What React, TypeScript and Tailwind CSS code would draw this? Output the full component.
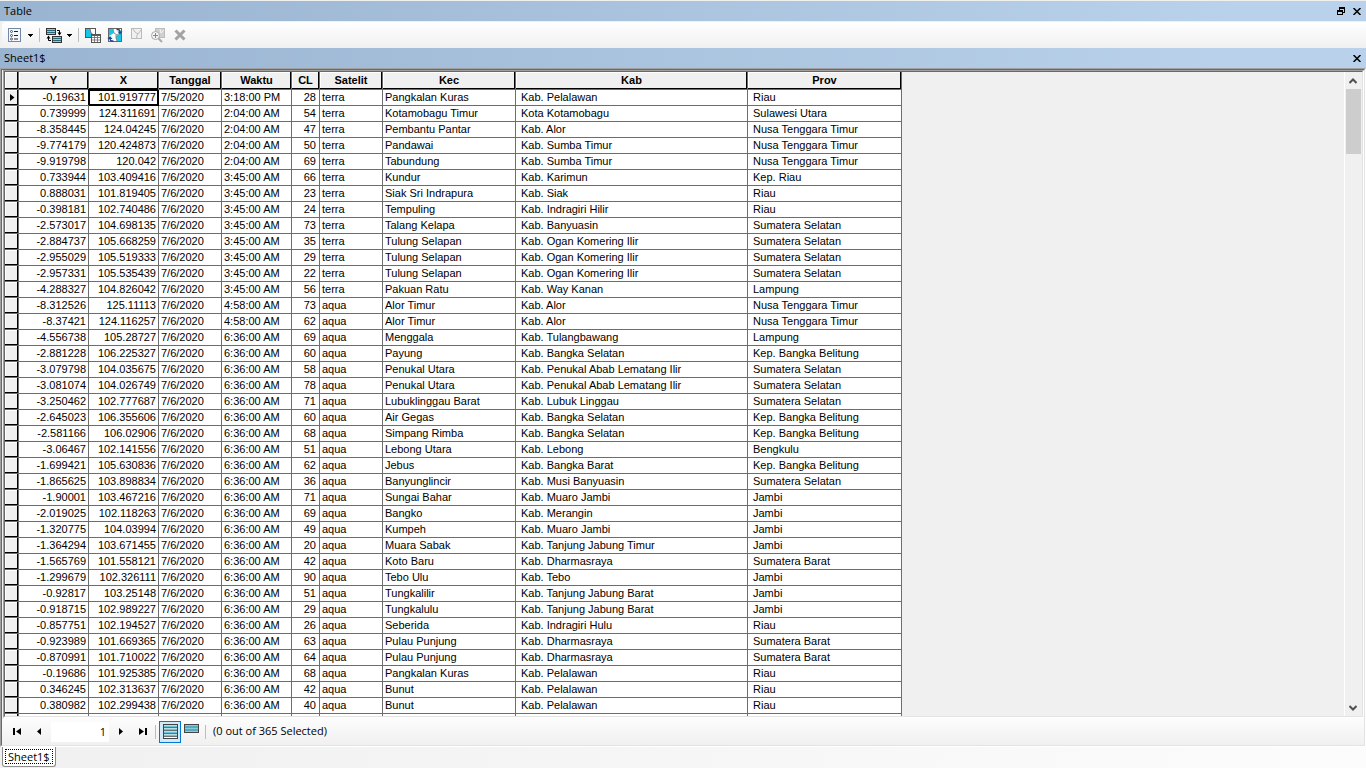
import type { ReactNode } from 'react';

type Row = [string, string, string, string, string, string, string, string, string];

const columns = [
  { name: 'Y', width: 'w-[70px]', align: 'text-right pr-0.5' },
  { name: 'X', width: 'w-[70px]', align: 'text-right pr-0.5' },
  { name: 'Tanggal', width: 'w-[63px]', align: 'text-left pl-0.5' },
  { name: 'Waktu', width: 'w-[70px]', align: 'text-left pl-0.5' },
  { name: 'CL', width: 'w-[28px]', align: 'text-right pr-[3px]' },
  { name: 'Satelit', width: 'w-[63px]', align: 'text-left pl-0.5' },
  { name: 'Kec', width: 'w-[133px]', align: 'text-left pl-0.5' },
  { name: 'Kab', width: 'w-[232px]', align: 'text-left pl-[5px]' },
  { name: 'Prov', width: 'w-[154px]', align: 'text-left pl-[5px]' },
];

const T = 'terra';
const A = 'aqua';
const D = '7/6/2020';

const rows: Row[] = [
  ['-0.19631', '101.919777', '7/5/2020', '3:18:00 PM', '28', T, 'Pangkalan Kuras', 'Kab. Pelalawan', 'Riau'],
  ['0.739999', '124.311691', D, '2:04:00 AM', '54', T, 'Kotamobagu Timur', 'Kota Kotamobagu', 'Sulawesi Utara'],
  ['-8.358445', '124.04245', D, '2:04:00 AM', '47', T, 'Pembantu Pantar', 'Kab. Alor', 'Nusa Tenggara Timur'],
  ['-9.774179', '120.424873', D, '2:04:00 AM', '50', T, 'Pandawai', 'Kab. Sumba Timur', 'Nusa Tenggara Timur'],
  ['-9.919798', '120.042', D, '2:04:00 AM', '69', T, 'Tabundung', 'Kab. Sumba Timur', 'Nusa Tenggara Timur'],
  ['0.733944', '103.409416', D, '3:45:00 AM', '66', T, 'Kundur', 'Kab. Karimun', 'Kep. Riau'],
  ['0.888031', '101.819405', D, '3:45:00 AM', '23', T, 'Siak Sri Indrapura', 'Kab. Siak', 'Riau'],
  ['-0.398181', '102.740486', D, '3:45:00 AM', '24', T, 'Tempuling', 'Kab. Indragiri Hilir', 'Riau'],
  ['-2.573017', '104.698135', D, '3:45:00 AM', '73', T, 'Talang Kelapa', 'Kab. Banyuasin', 'Sumatera Selatan'],
  ['-2.884737', '105.668259', D, '3:45:00 AM', '35', T, 'Tulung Selapan', 'Kab. Ogan Komering Ilir', 'Sumatera Selatan'],
  ['-2.955029', '105.519333', D, '3:45:00 AM', '29', T, 'Tulung Selapan', 'Kab. Ogan Komering Ilir', 'Sumatera Selatan'],
  ['-2.957331', '105.535439', D, '3:45:00 AM', '22', T, 'Tulung Selapan', 'Kab. Ogan Komering Ilir', 'Sumatera Selatan'],
  ['-4.288327', '104.826042', D, '3:45:00 AM', '56', T, 'Pakuan Ratu', 'Kab. Way Kanan', 'Lampung'],
  ['-8.312526', '125.11113', D, '4:58:00 AM', '73', A, 'Alor Timur', 'Kab. Alor', 'Nusa Tenggara Timur'],
  ['-8.37421', '124.116257', D, '4:58:00 AM', '62', A, 'Alor Timur', 'Kab. Alor', 'Nusa Tenggara Timur'],
  ['-4.556738', '105.28727', D, '6:36:00 AM', '69', A, 'Menggala', 'Kab. Tulangbawang', 'Lampung'],
  ['-2.881228', '106.225327', D, '6:36:00 AM', '60', A, 'Payung', 'Kab. Bangka Selatan', 'Kep. Bangka Belitung'],
  ['-3.079798', '104.035675', D, '6:36:00 AM', '58', A, 'Penukal Utara', 'Kab. Penukal Abab Lematang Ilir', 'Sumatera Selatan'],
  ['-3.081074', '104.026749', D, '6:36:00 AM', '78', A, 'Penukal Utara', 'Kab. Penukal Abab Lematang Ilir', 'Sumatera Selatan'],
  ['-3.250462', '102.777687', D, '6:36:00 AM', '71', A, 'Lubuklinggau Barat', 'Kab. Lubuk Linggau', 'Sumatera Selatan'],
  ['-2.645023', '106.355606', D, '6:36:00 AM', '60', A, 'Air Gegas', 'Kab. Bangka Selatan', 'Kep. Bangka Belitung'],
  ['-2.581166', '106.02906', D, '6:36:00 AM', '68', A, 'Simpang Rimba', 'Kab. Bangka Selatan', 'Kep. Bangka Belitung'],
  ['-3.06467', '102.141556', D, '6:36:00 AM', '51', A, 'Lebong Utara', 'Kab. Lebong', 'Bengkulu'],
  ['-1.699421', '105.630836', D, '6:36:00 AM', '62', A, 'Jebus', 'Kab. Bangka Barat', 'Kep. Bangka Belitung'],
  ['-1.865625', '103.898834', D, '6:36:00 AM', '36', A, 'Banyunglincir', 'Kab. Musi Banyuasin', 'Sumatera Selatan'],
  ['-1.90001', '103.467216', D, '6:36:00 AM', '71', A, 'Sungai Bahar', 'Kab. Muaro Jambi', 'Jambi'],
  ['-2.019025', '102.118263', D, '6:36:00 AM', '69', A, 'Bangko', 'Kab. Merangin', 'Jambi'],
  ['-1.320775', '104.03994', D, '6:36:00 AM', '49', A, 'Kumpeh', 'Kab. Muaro Jambi', 'Jambi'],
  ['-1.364294', '103.671455', D, '6:36:00 AM', '20', A, 'Muara Sabak', 'Kab. Tanjung Jabung Timur', 'Jambi'],
  ['-1.565769', '101.558121', D, '6:36:00 AM', '42', A, 'Koto Baru', 'Kab. Dharmasraya', 'Sumatera Barat'],
  ['-1.299679', '102.326111', D, '6:36:00 AM', '90', A, 'Tebo Ulu', 'Kab. Tebo', 'Jambi'],
  ['-0.92817', '103.25148', D, '6:36:00 AM', '51', A, 'Tungkalilir', 'Kab. Tanjung Jabung Barat', 'Jambi'],
  ['-0.918715', '102.989227', D, '6:36:00 AM', '29', A, 'Tungkalulu', 'Kab. Tanjung Jabung Barat', 'Jambi'],
  ['-0.857751', '102.194527', D, '6:36:00 AM', '26', A, 'Seberida', 'Kab. Indragiri Hulu', 'Riau'],
  ['-0.923989', '101.669365', D, '6:36:00 AM', '63', A, 'Pulau Punjung', 'Kab. Dharmasraya', 'Sumatera Barat'],
  ['-0.870991', '101.710022', D, '6:36:00 AM', '64', A, 'Pulau Punjung', 'Kab. Dharmasraya', 'Sumatera Barat'],
  ['-0.19686', '101.925385', D, '6:36:00 AM', '68', A, 'Pangkalan Kuras', 'Kab. Pelalawan', 'Riau'],
  ['0.346245', '102.313637', D, '6:36:00 AM', '42', A, 'Bunut', 'Kab. Pelalawan', 'Riau'],
  ['0.380982', '102.299438', D, '6:36:00 AM', '40', A, 'Bunut', 'Kab. Pelalawan', 'Riau'],
  ['', '', '', '', '', '', '', '', ''],
];

function IconButton({
  label,
  className = '',
  disabled,
  children,
}: {
  label: string;
  className?: string;
  disabled?: boolean;
  children: ReactNode;
}) {
  return (
    <button
      type="button"
      aria-label={label}
      title={label}
      disabled={disabled}
      className={`flex shrink-0 items-center justify-center ${className}`}
    >
      {children}
    </button>
  );
}

function Separator() {
  return <div className="h-[14px] w-px shrink-0 bg-[#bdbdbd]" />;
}

function Caret() {
  return (
    <svg width="5" height="3" viewBox="0 0 5 3" className="shrink-0" shapeRendering="crispEdges">
      <path d="M0 0h5v1H0zM1 1h3v1H1zM2 2h1v1H2z" fill="#000" />
    </svg>
  );
}

function CloseIcon() {
  return (
    <svg width="8" height="7" viewBox="0 0 8 7">
      <path d="M0.5 0L7.5 7M7.5 0L0.5 7" stroke="#000" strokeWidth="1.5" />
    </svg>
  );
}

function OptionsIcon() {
  return (
    <svg width="13" height="14" viewBox="0 0 13 14">
      <rect x="0.5" y="0.5" width="12" height="13" fill="#f4f8fc" stroke="#7088ac" />
      {[3.5, 7.5, 11].map((y) => (
        <g key={y}>
          <circle cx="3.5" cy={y} r="1" fill="#fff" stroke="#333" strokeWidth="0.8" />
          <path d={`M6 ${y}h4`} stroke="#222" />
        </g>
      ))}
    </svg>
  );
}

function RelateIcon() {
  return (
    <svg width="16" height="15" viewBox="0 0 16 15">
      <rect x="0.5" y="0.5" width="9" height="6" fill="#7ed0e3" stroke="#333" />
      <path d="M1 2.5h8M1 4.5h8" stroke="#286878" />
      <rect x="6.5" y="8.5" width="9" height="6" fill="#7ed0e3" stroke="#333" />
      <path d="M7 10.5h8M7 12.5h8" stroke="#286878" />
      <path d="M11 2.5h2.5V5M5 12.5H2.5V10" fill="none" stroke="#000" />
      <path d="M11.5 4.500h4l-2 3zM0.500 10.500h4l-2-3z" fill="#000" />
    </svg>
  );
}

function SelectAttributesIcon() {
  return (
    <svg width="16" height="15" viewBox="0 0 16 15">
      <rect x="0.5" y="0.5" width="10" height="9" fill="#fff" stroke="#555" />
      <path d="M1 1h4l1 4 4 3v1H1z" fill="#18c5e8" />
      <path d="M5 1l1 4 4 3" fill="none" stroke="#777" />
      <rect x="6.5" y="6.5" width="9" height="8" fill="#fff" stroke="#555" />
      <path d="M7 7.5h8" stroke="#44648c" />
      <path d="M7 9.5h8M7 12h8M9.5 8v6M12.5 8v6" stroke="#666" strokeWidth="0.8" />
    </svg>
  );
}

function SwitchSelectionIcon() {
  return (
    <svg width="16" height="15" viewBox="0 0 16 15">
      <rect x="1.5" y="0.5" width="13" height="13" fill="#fff" stroke="#666" />
      <path d="M2 1h4l1 4-5 3z" fill="#18c5e8" />
      <path d="M9 8l5-3v8h-4l-1-2z" fill="#18c5e8" />
      <path d="M6 1l1 4 3 2 4-3M9 7v3l1 3" fill="none" stroke="#888" />
      <path d="M9.5 1.5q3.5-0.5 3.500 2.500" fill="none" stroke="#17498b" strokeWidth="1.5" />
      <path d="M10.500 3.500h5L13 6.500z" fill="#17498b" />
      <path d="M6.500 13q-3.500 0.500-3.500-2.500" fill="none" stroke="#17498b" strokeWidth="1.5" />
      <path d="M0.500 11h5L3 8z" fill="#17498b" />
    </svg>
  );
}

function ClearSelectionIcon() {
  return (
    <svg width="11" height="11" viewBox="0 0 11 11">
      <rect x="0.5" y="0.5" width="10" height="10" fill="#f0f0f0" stroke="#bababa" />
      <path d="M2 1l2 3 3 2 3-4M6.500 6l-1 4" fill="none" stroke="#bababa" />
    </svg>
  );
}

function ZoomSelectedIcon() {
  return (
    <svg width="16" height="15" viewBox="0 0 16 15">
      <rect x="5.5" y="0.5" width="9" height="9" fill="#d0d0d0" stroke="#bcbcbc" />
      <path d="M10 1l1 4 3-3" fill="none" stroke="#f4f4f4" />
      <circle cx="5.5" cy="7.5" r="4" fill="#f5f5f5" stroke="#aaa" />
      <path d="M3 7.5h5M5.5 5v5" stroke="#888" />
      <path d="M8.5 10.5L12 14" stroke="#aaa" strokeWidth="2" />
    </svg>
  );
}

function TitleBar({ title, restore }: { title: string; restore?: boolean }) {
  return (
    <div className="flex shrink-0 items-center bg-linear-to-r from-[#99b4d1] to-[#b9d1ea] to-90% pr-[5px] pl-1">
      <h2 className="flex-1 text-[11px] leading-5">{title}</h2>
      {restore && (
        <IconButton label="Restore" className="mr-2">
          <svg width="8" height="8" viewBox="0 0 8 8" shapeRendering="crispEdges">
            <path d="M2 0h6v6H6V5h1V2H3v1H2zM0 3h6v5H0zM1 5v2h4V5z" fill="#000" fillRule="evenodd" />
          </svg>
        </IconButton>
      )}
      <IconButton label={`Close ${title}`}>
        <CloseIcon />
      </IconButton>
    </div>
  );
}

function Toolbar() {
  return (
    <div className="flex h-[26px] shrink-0 items-center rounded-l bg-linear-to-b from-white to-[#f0f0f0] pl-1.5">
      <IconButton label="Table Options" className="gap-[7px]">
        <OptionsIcon />
        <Caret />
      </IconButton>
      <div className="ml-1.5 flex items-center gap-1.5">
        <Separator />
        <IconButton label="Related Tables" className="gap-[5px]">
          <RelateIcon />
          <Caret />
        </IconButton>
        <Separator />
      </div>
      <div className="ml-1.5 flex items-center gap-1.5">
        <IconButton label="Select By Attributes">
          <SelectAttributesIcon />
        </IconButton>
        <IconButton label="Switch Selection">
          <SwitchSelectionIcon />
        </IconButton>
      </div>
      <div className="ml-2 flex items-start gap-2">
        <IconButton label="Clear Selection" disabled>
          <ClearSelectionIcon />
        </IconButton>
        <IconButton label="Zoom To Selected" disabled>
          <ZoomSelectedIcon />
        </IconButton>
      </div>
      <IconButton label="Delete Selected" className="ml-2" disabled>
        <svg width="12" height="12" viewBox="0 0 12 12">
          <path d="M1.5 1.5l9 9M10.5 1.5l-9 9" stroke="#a3a3a3" strokeWidth="3" />
        </svg>
      </IconButton>
    </div>
  );
}

function DataTable() {
  return (
    <table className="w-[897px] table-fixed border-separate border-spacing-0 bg-white font-['Liberation_Sans',Arial,sans-serif] text-[11px] leading-[15px]">
      <colgroup>
        <col className="w-[14px]" />
        {columns.map((c) => (
          <col key={c.name} className={c.width} />
        ))}
      </colgroup>
      <thead>
        <tr className="h-[18px]">
          <td className="border-r border-b border-[#6d6d6d] bg-[#f0f0f0] p-0 shadow-[inset_-1px_-1px_0_#000,inset_1px_1px_0_#fff]" />
          {columns.map((c) => (
            <th
              key={c.name}
              scope="col"
              className="border-r border-b border-[#6d6d6d] bg-[#f0f0f0] p-0 text-center font-bold shadow-[inset_-1px_-1px_0_#000,inset_1px_1px_0_#fff]"
            >
              {c.name}
            </th>
          ))}
        </tr>
      </thead>
      <tbody>
        {rows.map((row, i) => (
          <tr key={i} className="h-4">
            <td className="border-r border-b border-[#6d6d6d] bg-[#f0f0f0] p-0 shadow-[inset_-1px_-1px_0_#000,inset_1px_1px_0_#fff]">
              {i === 0 && (
                <svg width="5" height="7" viewBox="0 0 5 7" className="ml-[5px]">
                  <path d="M0 0L4.5 3.5L0 7z" fill="#000" />
                </svg>
              )}
            </td>
            {row.map((value, j) => (
              <td
                key={j}
                className={`overflow-hidden border-r border-b py-0 whitespace-nowrap ${columns[j].align} ${
                  i === 0 && j === 1
                    ? 'border-black shadow-[-1px_-1px_0_#000,inset_-1px_-1px_0_#000,inset_1px_1px_0_#000]'
                    : 'border-[#6d6d6d]'
                }`}
              >
                {value}
              </td>
            ))}
          </tr>
        ))}
      </tbody>
    </table>
  );
}

function ScrollBar() {
  return (
    <div className="flex w-[18px] shrink-0 flex-col items-center border-l border-white bg-[#f0f0f0] pr-px">
      <IconButton label="Scroll up" className="h-[17px] w-full">
        <svg width="8" height="6" viewBox="0 0 8 6">
          <path d="M0.5 5L4 1.5L7.5 5" fill="none" stroke="#505050" strokeWidth="2" />
        </svg>
      </IconButton>
      <div className="h-[65px] w-[15px] bg-[#cdcdcd]" />
      <IconButton label="Scroll down" className="mt-auto h-[17px] w-full">
        <svg width="8" height="6" viewBox="0 0 8 6">
          <path d="M0.5 1L4 4.5L7.5 1" fill="none" stroke="#505050" strokeWidth="2" />
        </svg>
      </IconButton>
    </div>
  );
}

function RecordBar() {
  return (
    <div className="flex h-[27px] shrink-0 items-center rounded-l bg-linear-to-b from-[#fdfdfd] to-[#f0f0f0] pl-[11px]">
      <IconButton label="First record" className="mr-4">
        <svg width="8" height="7" viewBox="0 0 8 7">
          <path d="M0 0h2v7H0zM8 0v7L3 3.5z" fill="#000" />
        </svg>
      </IconButton>
      <IconButton label="Previous record">
        <svg width="4" height="7" viewBox="0 0 4 7">
          <path d="M4 0v7L0 3.5z" fill="#000" />
        </svg>
      </IconButton>
      <input
        aria-label="Record number"
        defaultValue="1"
        className="ml-2.5 h-5 w-[58px] bg-white pr-[3px] text-right text-[11px] outline-none"
      />
      <IconButton label="Next record" className="ml-2.5">
        <svg width="4" height="7" viewBox="0 0 4 7">
          <path d="M0 0v7L4 3.5z" fill="#000" />
        </svg>
      </IconButton>
      <IconButton label="Last record" className="mr-2 ml-4">
        <svg width="8" height="7" viewBox="0 0 8 7">
          <path d="M6 0h2v7H6zM0 0v7L5 3.5z" fill="#000" />
        </svg>
      </IconButton>
      <Separator />
      <IconButton label="Show all records" className="ml-[3px] h-[22px] w-[22px] border border-[#0078d7] bg-[#d5e8f8]">
        <svg width="15" height="15" viewBox="0 0 15 15">
          <rect x="0.5" y="0.5" width="14" height="14" fill="#fff" stroke="#444" />
          <path d="M1 2.5h13M1 5.5h13M1 8.5h13M1 11.5h13" stroke="#6cc3d5" strokeWidth="2" />
          <path d="M1 3.5h13M1 6.5h13M1 9.5h13M1 12.5h13" stroke="#444" strokeWidth="0.7" />
        </svg>
      </IconButton>
      <IconButton label="Show selected records" className="mr-1.5 ml-[3px] h-[22px] pb-1.5">
        <svg width="15" height="9" viewBox="0 0 15 9">
          <rect x="0.5" y="0.5" width="14" height="8" fill="#7ed0e3" stroke="#444" />
          <path d="M1 3h13M1 6h13" stroke="#3a7f8e" />
        </svg>
      </IconButton>
      <Separator />
      <span className="ml-[7px] text-[11px]">(0 out of 365 Selected)</span>
    </div>
  );
}

export default function App() {
  return (
    <div className="flex h-screen flex-col overflow-hidden bg-[#f0f0f0] pt-px font-['Open_Sans','Segoe_UI',sans-serif] text-black">
      <TitleBar title="Table" restore />
      <div className="flex shrink-0 flex-col pt-px pl-0.5">
        <Toolbar />
      </div>
      <TitleBar title="Sheet1$" />
      <div className="flex min-h-0 flex-1 flex-col border border-t-[#a0a0a0] border-r-white border-b-white border-l-[#a0a0a0]">
        <div className="flex min-h-0 flex-1 flex-col border border-t-[#696969] border-r-[#e3e3e3] border-b-[#e3e3e3] border-l-[#696969]">
          <div className="ml-px flex min-h-0 flex-1 border border-t-[#a0a0a0] border-r-white border-b-white border-l-[#a0a0a0]">
            <div className="flex min-h-0 flex-1 border border-t-[#696969] border-r-[#e3e3e3] border-b-[#e3e3e3] border-l-[#696969]">
              <div className="min-h-0 flex-1 overflow-hidden">
                <DataTable />
              </div>
              <ScrollBar />
            </div>
          </div>
          <RecordBar />
        </div>
      </div>
      <div
        className="flex h-[21px] shrink-0 items-start bg-linear-to-r from-[#f0f0f0] to-[#fcfcfc] pl-0.5"
        role="tablist"
      >
        <button
          type="button"
          role="tab"
          aria-selected="true"
          className="rounded-b-[3px] border border-t-0 border-[#8c8c8c] bg-white p-0.5 text-[11px]"
        >
          <span className="block border border-dotted border-black px-0.5 leading-[13px]">Sheet1$</span>
        </button>
      </div>
    </div>
  );
}
